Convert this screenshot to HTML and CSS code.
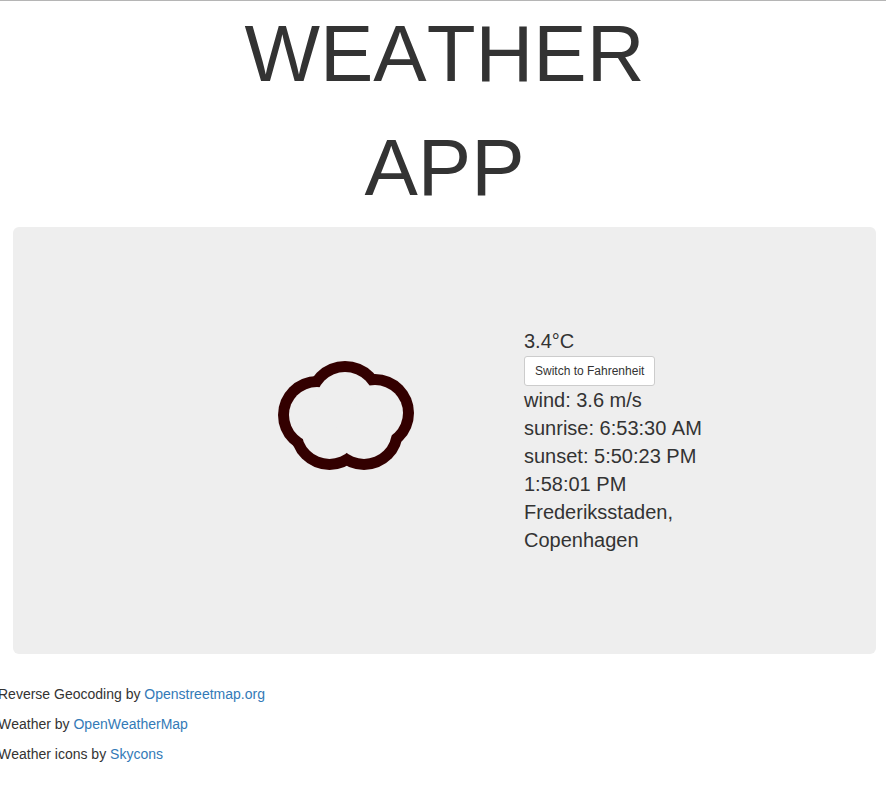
FILE: index.html
```html
<!DOCTYPE html>
<html lang="en">
<head>
  <meta charset="utf-8">
  <meta name="viewport" content="width=device-width, initial-scale=1">
  <title>Weather App</title>
  <link rel="stylesheet" href="styles.css">
</head>
<body>
  <main class="page">
    <h1 class="title">WEATHER<br>APP</h1>
    <section class="panel">
      <svg class="icon" viewBox="1 0 180 180" role="img" aria-label="Cloudy">
        <g class="cloud-edge">
          <circle cx="62" cy="88" r="39"/>
          <circle cx="90" cy="74" r="40"/>
          <circle cx="120" cy="86" r="39"/>
          <circle cx="74.500" cy="104" r="39"/>
          <circle cx="109" cy="104" r="39"/>
        </g>
        <g class="cloud-body">
          <circle cx="62" cy="88" r="28"/>
          <circle cx="90" cy="74" r="29"/>
          <circle cx="120" cy="86" r="28"/>
          <circle cx="74.500" cy="104" r="28"/>
          <circle cx="109" cy="104" r="28"/>
        </g>
      </svg>
      <div class="details">
        <div>3.4°C</div>
        <button class="switch" type="button">Switch to Fahrenheit</button>
        <div>wind: 3.6 m/s</div>
        <div>sunrise: 6:53:30 AM</div>
        <div>sunset: 5:50:23 PM</div>
        <div>1:58:01 PM</div>
        <div>Frederiksstaden, Copenhagen</div>
      </div>
    </section>
    <footer class="credits">
      <p>Reverse Geocoding by <a href="#">Openstreetmap.org</a></p>
      <p>Weather by <a href="#">OpenWeatherMap</a></p>
      <p>Weather icons by <a href="#">Skycons</a></p>
    </footer>
  </main>
</body>
</html>
```
FILE: styles.css
```css
* {
  box-sizing: border-box;
}

body {
  margin: 0;
  border-top: 1px solid #b5b5b5;
  background: #fff;
  color: #333;
  font-family: "Liberation Sans", Arial, sans-serif;
  font-kerning: none;
  font-size: 14px;
  line-height: 20px;
}

.page {
  padding: 0 10px 0 13px;
}

.title {
  margin: -4px 0 0;
  padding-bottom: 2px;
  font-size: 80px;
  font-weight: 400;
  line-height: 114px;
  text-align: center;
}

.panel {
  display: grid;
  grid-template-columns: 154fr 357fr 190fr 162fr;
  align-items: start;
  padding: 100px 0;
  border-radius: 6px;
  background: #eee;
}

.icon {
  grid-column: 2;
  justify-self: center;
  width: 180px;
  height: 180px;
}

.cloud-edge {
  fill: #300;
}

.cloud-body {
  fill: #eee;
}

.details {
  grid-column: 3;
  font-size: 20px;
  line-height: 28px;
}

.switch {
  display: block;
  height: 30px;
  margin-top: 1px;
  padding: 0 10px;
  border: 1px solid #ccc;
  border-radius: 3px;
  background: #fff;
  color: #333;
  font-family: inherit;
  font-size: 12px;
  line-height: 18px;
}

.credits {
  margin: 30px 0 0 -15px;
}

.credits p {
  margin: 0 0 10px;
}

.credits a {
  color: #337ab7;
  text-decoration: none;
}
```
